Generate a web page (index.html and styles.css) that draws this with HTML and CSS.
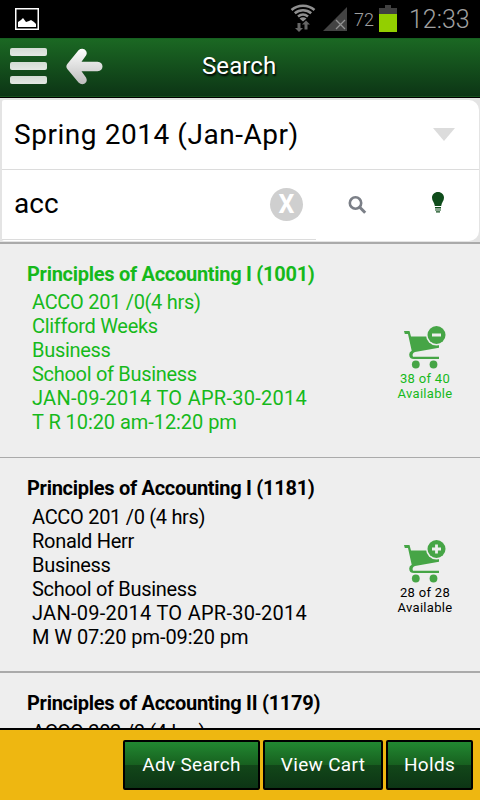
FILE: index.html
```
<!DOCTYPE html>
<html lang="en">
<head>
    <meta charset="UTF-8">
    <meta name="viewport" content="width=device-width, initial-scale=1.0">
    <title>Search</title>
    <link rel="stylesheet" href="styles.css">
</head>
<body>

    <div class="statusbar">
        <svg class="picture" width="24" height="22" viewBox="0 0 24 22">
            <rect x=".75" y=".75" width="22.5" height="20.5" fill="none" stroke="#fff" stroke-width="1.5"/>
            <path d="M3 19v-5l3-2 2-2 3 4 3-1 2-1 3 2 2 2v3z" fill="#fff"/>
        </svg>
        <div class="status-icons">
            <svg class="wifi" width="26" height="28" viewBox="0 0 26 28">
                <g fill="none" stroke="#8f8f8f" stroke-width="2.6">
                    <path d="M1.500 6C8 .4 18 .4 24.500 6"/>
                    <path d="M4.800 9.300c4.800-4 11.600-4 16.400 0"/>
                    <path d="M8 12.500c3-2.400 7-2.400 10 0"/>
                </g>
                <path d="M9.500 14.500q3.500-2.500 7 0l-3.500 3z" fill="#8f8f8f"/>
                <path d="M7.500 19h3v5h2.500l-4 4-4-4h2.500z" fill="#666"/>
                <path d="M14.500 25.500h3v-5H20l-4-4-4 4h2.500z" fill="#666"/>
            </svg>
            <svg class="signal" width="25" height="24" viewBox="0 0 25 24">
                <path d="M0 24L24 0v24z" fill="#434343"/>
                <path d="M13 13l9 9M22 13l-9 9" stroke="#929292" stroke-width="1.300"/>
            </svg>
            <span class="percent">72</span>
            <svg class="battery" width="18" height="27" viewBox="0 0 18 27">
                <path d="M0 3h6V0h6v3h6v7H0z" fill="#404040"/>
                <path d="M0 9h18v18H0z" fill="#93cf00"/>
            </svg>
            <span class="clock">12:33</span>
        </div>
    </div>

    <header>
        <div class="menu"><i></i><i></i><i></i></div>
        <svg class="back" width="37" height="37" viewBox="0 0 37 37">
            <defs>
                <linearGradient id="arrow" x1="0" y1="0" x2="0" y2="37" gradientUnits="userSpaceOnUse">
                    <stop offset="0" stop-color="#fff"/>
                    <stop offset="1" stop-color="#bcbcbc"/>
                </linearGradient>
            </defs>
            <path d="M12.500 2.200Q15.500-.3 18.800 1.400Q22 4 20 7.500L15.500 13.800H31.500Q36.500 14.500 36.500 18.500Q36.500 22.700 31.500 23.200H15.500L20 29.500Q22 33.500 18.800 35.500Q15.500 37.200 12.500 34.500L1.300 21Q-.6 18.500 1.300 16z" fill="url(#arrow)"/>
        </svg>
        <h1>Search</h1>
    </header>

    <section class="form">
        <div class="panel">
            <div class="term">
                <span>Spring 2014 (Jan-Apr)</span>
                <i class="caret"></i>
            </div>
            <div class="query">
                <div class="field">
                    <span class="text">acc</span>
                    <span class="clear">X</span>
                </div>
                <svg class="find" width="19" height="19" viewBox="0 0 19 19">
                    <circle cx="7.500" cy="7" r="5.700" fill="none" stroke="#7b7f87" stroke-width="2.600"/>
                    <path d="M11.500 11l5.700 5.800" stroke="#7b7f87" stroke-width="3"/>
                </svg>
                <svg class="bulb" width="12" height="21" viewBox="0 0 12 21" fill="#0f4c1b">
                    <path d="M6 0c3.500 0 6 2.500 6 5.800 0 3.200-2.500 4.700-2.800 8.200H2.800C2.500 10.500 0 9 0 5.800 0 2.500 2.500 0 6 0z"/>
                    <path d="M3 15h6v1.600H3zM3 17.400h6V18.600H3zM4 19.200h4V20.400H4z"/>
                </svg>
            </div>
        </div>
    </section>

    <section class="results">
        <div class="course added">
            <div class="info">
                <h2>Principles of Accounting I (1001)</h2>
                <p>ACCO 201 /0(4 hrs)</p>
                <p>Clifford Weeks</p>
                <p>Business</p>
                <p>School of Business</p>
                <p class="dates">JAN-09-2014 TO APR-30-2014</p>
                <p class="time">T R 10:20 am-12:20 pm</p>
            </div>
            <div class="seats">
                <svg width="42" height="43" viewBox="0 0 42 43">
                    <path d="M0 5h5.500l1.500 5.500H35v11.200L11 26q-3.500 1.500-2 4.700h26V33H10q-4.800 0-4.800-4.500 0-2.500 2.500-3.800L4 8H.8z" fill="#46a546"/>
                    <circle cx="11.800" cy="38.500" r="3.900" fill="#46a546"/>
                    <circle cx="29.500" cy="38.500" r="3.900" fill="#46a546"/>
                    <circle cx="32.500" cy="9" r="10.500" fill="#eee"/>
                    <circle cx="32.500" cy="9" r="9" fill="#46a546"/>
                    <path d="M28 9h9" stroke="#eee" stroke-width="3"/>
                </svg>
                <span>38 of 40</span>
                <span>Available</span>
            </div>
        </div>

        <div class="course">
            <div class="info">
                <h2>Principles of Accounting I (1181)</h2>
                <p>ACCO 201 /0 (4 hrs)</p>
                <p>Ronald Herr</p>
                <p>Business</p>
                <p>School of Business</p>
                <p class="dates">JAN-09-2014 TO APR-30-2014</p>
                <p class="time">M W 07:20 pm-09:20 pm</p>
            </div>
            <div class="seats">
                <svg width="42" height="43" viewBox="0 0 42 43">
                    <path d="M0 5h5.500l1.500 5.500H35v11.200L11 26q-3.500 1.500-2 4.700h26V33H10q-4.800 0-4.800-4.500 0-2.500 2.500-3.800L4 8H.8z" fill="#46a546"/>
                    <circle cx="11.800" cy="38.500" r="3.900" fill="#46a546"/>
                    <circle cx="29.500" cy="38.500" r="3.900" fill="#46a546"/>
                    <circle cx="32.500" cy="9" r="10.500" fill="#eee"/>
                    <circle cx="32.500" cy="9" r="9" fill="#46a546"/>
                    <path d="M28 9h9M32.500 4.500v9" stroke="#eee" stroke-width="2.800"/>
                </svg>
                <span>28 of 28</span>
                <span>Available</span>
            </div>
        </div>

        <div class="course">
            <div class="info">
                <h2>Principles of Accounting II (1179)</h2>
                <p>ACCO 202 /0 (4 hrs)</p>
            </div>
        </div>
    </section>

    <footer>
        <button class="adv">Adv Search</button>
        <button class="cart">View Cart</button>
        <button class="holds">Holds</button>
    </footer>

</body>
</html>
```
FILE: styles.css
```
* {
    box-sizing: border-box;
}

body {
    margin: 0;
    height: 800px;
    display: flex;
    flex-direction: column;
    overflow: hidden;
    font-family: Roboto, sans-serif;
    background: #eee;
    color: #000;
}

h1, h2, p {
    margin: 0;
}

svg {
    display: block;
    flex: none;
}

/* Phone status bar */
.statusbar {
    flex: none;
    height: 38px;
    display: flex;
    justify-content: space-between;
    padding: 0 9px 0 15px;
    background: #000;
    color: #a0a0a0;
}

.picture {
    margin-top: 8px;
}

.status-icons {
    display: flex;
    align-items: flex-start;
}

.wifi {
    margin: 4px 7px 0 0;
}

.signal {
    margin: 7px 6px 0 0;
}

.percent {
    width: 25px;
    font-size: 18px;
    font-weight: 300;
    line-height: 40px;
}

.battery {
    margin-top: 5px;
}

.clock {
    width: 62px;
    margin-left: 12px;
    font-size: 25px;
    font-weight: 300;
    line-height: 40px;
    white-space: nowrap;
}

/* Title bar */
header {
    flex: none;
    height: 60px;
    display: flex;
    align-items: flex-start;
    background: linear-gradient(#1b6823, #0c3415);
    border-top: 1px solid #166021;
    border-bottom: 1px solid #000;
    box-shadow: inset 0 -1px #14501c;
}

.menu {
    width: 37px;
    margin: 9px 19px 0 10px;
}

.menu i {
    display: block;
    height: 8px;
    margin-bottom: 6px;
    border-radius: 2px;
    background: linear-gradient(#d3dcd4, #e3e8e3);
}

.back {
    margin-top: 9px;
}

h1 {
    margin-left: 99px;
    font-size: 24px;
    font-weight: normal;
    line-height: 54px;
    letter-spacing: 0.1px;
    color: #fff;
    text-shadow: 1px 2px 2px #000;
}

/* Search form */
.form {
    flex: none;
    height: 146px;
    padding: 2px 1px 1px 2px;
    background: #e4e4e4;
    border-bottom: 2px solid #aaa;
}

.panel {
    height: 141px;
    background: #fff;
    border-radius: 2px 10px 10px 2px;
}

.term {
    display: flex;
    align-items: center;
    justify-content: space-between;
    height: 70px;
    padding: 0 24px 1px 12px;
    border-bottom: 1px solid #dcdcdc;
    font-size: 28px;
    letter-spacing: 0.55px;
}

.caret {
    border: solid transparent;
    border-width: 13px 11px 0;
    border-top-color: #dcdcdc;
}

.query {
    display: flex;
    align-items: center;
    height: 70px;
}

.field {
    width: 314px;
    height: 70px;
    display: flex;
    align-items: center;
    padding: 0 13px 1px 12px;
    border-bottom: 1px solid #dcdcdc;
}

.text {
    flex: 1;
    padding-bottom: 1px;
    font-size: 28px;
}

.clear {
    width: 33px;
    height: 33px;
    border-radius: 50%;
    background: #cfcfcf;
    color: #fff;
    font-size: 25px;
    font-weight: bold;
    line-height: 33px;
    text-align: center;
}

.find {
    margin-left: 32px;
}

.bulb {
    margin: -5px 0 0 65px;
}

/* Course list */
.results {
    flex: 1;
    min-height: 0;
    overflow: hidden;
}

.course {
    height: 215px;
    display: flex;
    justify-content: space-between;
    padding: 16px 25px 0 27px;
    border-bottom: 2px solid #aaa;
}

.added {
    height: 214px;
    border-bottom-width: 1px;
    color: #16b91b;
}

h2 {
    margin-bottom: 3px;
    font-size: 20px;
    font-weight: bold;
    line-height: 28px;
    letter-spacing: -0.28px;
}

.added h2 {
    margin-bottom: 2px;
}

.info p {
    padding-left: 5px;
    font-size: 20px;
    line-height: 24px;
    letter-spacing: -0.3px;
}

.info .dates {
    letter-spacing: 0.27px;
}

.info .time {
    letter-spacing: -0.06px;
}

.seats {
    width: 60px;
    margin-top: 66px;
    text-align: center;
    font-size: 13px;
    line-height: 15px;
    letter-spacing: 0.3px;
}

.seats svg {
    margin: 0 0 2px 9px;
}

.seats span {
    display: block;
}

/* Bottom bar */
footer {
    flex: none;
    height: 72px;
    display: flex;
    justify-content: flex-end;
    align-items: flex-start;
    gap: 3px;
    padding: 10px 7px 0 0;
    background: #eeb711;
    border-top: 2px solid #000;
}

button {
    height: 50px;
    padding: 0 0 2px;
    border: 2px solid #000;
    border-radius: 2px;
    background: linear-gradient(#228831, #17601f 50%, #124719 50%, #0d3515);
    color: #fff;
    font-family: inherit;
    font-size: 19px;
    letter-spacing: 0.3px;
}

.adv {
    width: 137px;
}

.cart {
    width: 120px;
}

.holds {
    width: 87px;
}
```
